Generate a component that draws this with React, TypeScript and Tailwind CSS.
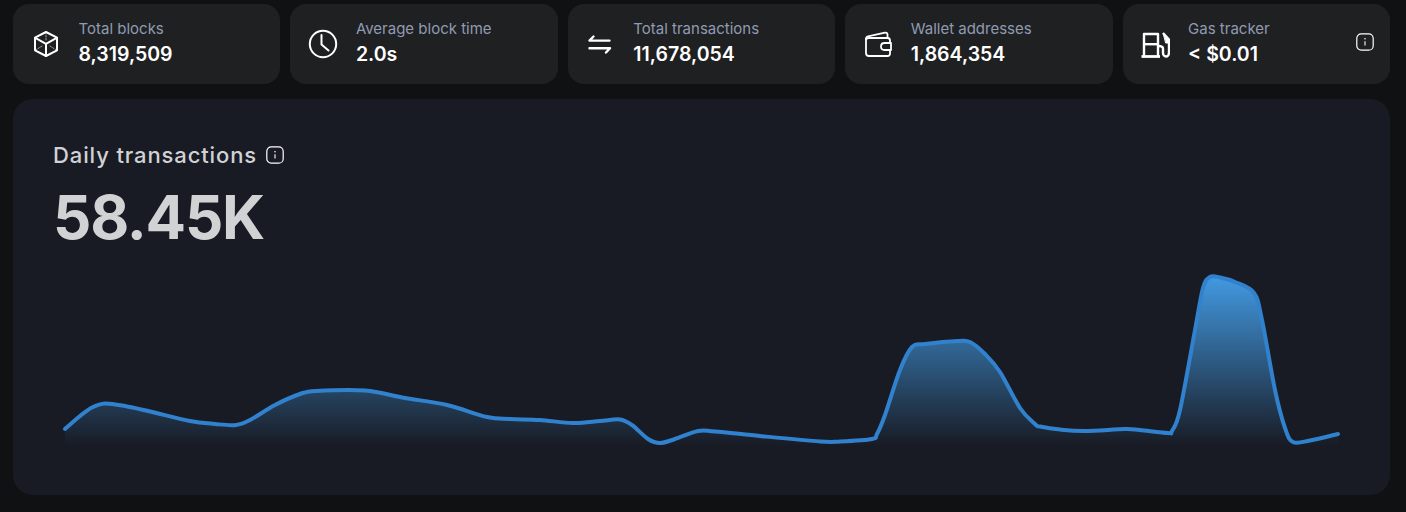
import React from "react";

const pts: [number, number][] = [
  [65,429],[80,416],[92,407.5],[105,403.5],[125,406],[150,411.5],[190,421],[215,424],[236,425],[250,420],[275,405],[300,394],[316,391],[365,390.5],
  [405,398],[447,405],[487,417],[510,419],[540,420],[573,423],[600,421],[620,419.5],[632,425],[648,439],[660,443],[675,439],[698,431],[715,431.5],
  [760,436],[820,441.5],[840,441.5],[872,439],[877,434],[885,415],[900,370],[912,347],[925,344],[958,341],[970,342],[985,354],[1000,372],[1020,408],[1035,424],[1040,426.5],
  [1060,429.5],[1085,431],[1125,429],[1140,430],[1168,433],[1172,431],[1180,410],[1195,330],[1203,288],[1210,277],[1220,277.5],[1235,282],[1254,293],[1262,320],[1275,390],[1285,428],[1293,442],[1310,440.5],[1338,434],
];

function smooth(p: [number, number][]) {
  let d = `M${p[0][0]},${p[0][1]}`;
  for (let i = 0; i < p.length - 1; i++) {
    const p0 = p[Math.max(i - 1, 0)];
    const p1 = p[i];
    const p2 = p[i + 1];
    const p3 = p[Math.min(i + 2, p.length - 1)];
    const c1x = p1[0] + (p2[0] - p0[0]) / 6;
    const c1y = p1[1] + (p2[1] - p0[1]) / 6;
    const c2x = p2[0] - (p3[0] - p1[0]) / 6;
    const c2y = p2[1] - (p3[1] - p1[1]) / 6;
    d += ` C${c1x.toFixed(1)},${c1y.toFixed(1)} ${c2x.toFixed(1)},${c2y.toFixed(1)} ${p2[0]},${p2[1]}`;
  }
  return d;
}
const line = smooth(pts);

const Ico = ({ children, sw = 2 }: { children: React.ReactNode; sw?: number }) => (
  <svg width="30" height="30" viewBox="0 0 30 30" fill="none" stroke="#fff" strokeWidth={sw} strokeLinecap="round" strokeLinejoin="round" className="shrink-0">
    {children}
  </svg>
);

const Cube = () => (
  <Ico sw={2}>
    <path d="M15 3 L26 8.7 V21.3 L15 27 L4 21.3 V8.7 Z" />
    <path d="M4.3 8.9 L15 14.8 L25.7 8.9" />
    <path d="M15 15 V27" />
    <path d="M15 3.5 V12 M4.5 21 L12 16.5 M25.5 21 L18 16.5" strokeWidth="0.6" strokeDasharray="1.5 1.5" />
  </Ico>
);
const Clock = () => (
  <Ico sw={2}>
    <circle cx="15" cy="15" r="13.2" />
    <path d="M13.5 6 V15.5 L20.5 21.5" />
  </Ico>
);
const Arrows = () => (
  <Ico sw={2.4}>
    <path d="M4.5 11.6 H24.5 M4.5 11.6 L8.5 7.5" />
    <path d="M25 19.2 H4.5 M25 19.2 L21 23.5" />
  </Ico>
);
const Wallet = () => (
  <Ico sw={1.8}>
    <path d="M3 10 C3 8.5 3.8 7.6 5 7.3 L22 3.6 C23.5 3.3 24.5 4.2 24.5 5.5 V9" />
    <path d="M3 10 V24 C3 26 4.2 27 6 27 H24.5 C26 27 27 26 27 24.5 V21" />
    <path d="M3 10.5 C3.5 9.5 4.5 9 6 9 H24.5 C26 9 27 10 27 11.5 V14" />
    <path d="M21.5 14 H28 V21 H21.5 C19.5 21 18 19.5 18 17.5 C18 15.5 19.5 14 21.5 14 Z" />
  </Ico>
);
const Gas = () => (
  <Ico sw={2.4}>
    <path d="M1.5 27.5 H20" strokeLinecap="butt" strokeWidth="2.8" />
    <path d="M4 27 V5 H18 V27" strokeLinecap="butt" />
    <path d="M4 15.2 H18" strokeLinecap="butt" />
    <path d="M23 4 L29 10.5 V23.5 C29 26 27.5 27.5 26 27.5 C24.5 27.5 23 26 23 24 V19.5 C23 17.5 21 17 18 17" strokeLinecap="butt" />
    <path d="M23.5 5 L29 11 V14 H26 Z" fill="#fff" strokeWidth="1" />
  </Ico>
);
const Info = () => (
  <svg width="18" height="18" viewBox="0 0 18 18" fill="none" stroke="#fff" className="shrink-0">
    <rect x="0.8" y="0.8" width="16.4" height="16.4" rx="4.5" strokeWidth="1.2" />
    <path d="M9 8.2 V12.5" strokeWidth="1.1" />
    <circle cx="9" cy="5.7" r="0.8" fill="#fff" stroke="none" />
  </svg>
);

const stats = [
  { icon: <Cube />, label: "Total blocks", value: "8,319,509" },
  { icon: <Clock />, label: "Average block time", value: "2.0s" },
  { icon: <Arrows />, label: "Total transactions", value: "11,678,054" },
  { icon: <Wallet />, label: "Wallet addresses", value: "1,864,354" },
  { icon: <Gas />, label: "Gas tracker", value: "< $0.01", info: true },
];

export default function App() {
  return (
    <div className="min-h-[512px] bg-[#0f1112] pl-[13px] pr-4 pt-1 font-['Inter',sans-serif]">
      <div className="grid grid-cols-5 gap-[10px]">
        {stats.map((s) => (
          <div key={s.label} className="flex h-20 items-center gap-[18px] rounded-2xl bg-[#1f2021] pl-[17.5px] pr-4">
            {s.icon}
            <div className="flex-1">
              <div className="text-[15px] leading-5 text-[#8f9bb3]">{s.label}</div>
              <div className="text-[19.5px] leading-[30px] font-semibold text-white">{s.value}</div>
            </div>
            {s.info && <div className="-mt-[5px]"><Info /></div>}
          </div>
        ))}
      </div>
      <div className="mt-[15px] h-[396px] rounded-[20px] bg-[#181b24] p-10">
        <div className="flex items-center gap-[9px] text-[22px] leading-8 font-medium tracking-[0.04em] text-[#d1d2d4]">
          Daily transactions <Info />
        </div>
        <div className="mt-[6px] text-[60px] leading-[80px] font-bold tracking-[-0.02em] text-[#d1d2d4]">58.45K</div>
        <svg className="mt-[17px] block" width="1297" height="181" viewBox="53 274 1297 181">
          <defs>
            <linearGradient id="fill" gradientUnits="userSpaceOnUse" x1="0" y1="277" x2="0" y2="446">
              <stop offset="0" stopColor="#4299e1" />
              <stop offset="1" stopColor="#4299e1" stopOpacity="0" />
            </linearGradient>
          </defs>
          <path d={`${line} L1338,446 L65,446 Z`} fill="url(#fill)" />
          <path d={line} fill="none" stroke="#3182ce" strokeWidth="4" strokeLinecap="round" strokeLinejoin="round" />
        </svg>
      </div>
    </div>
  );
}
